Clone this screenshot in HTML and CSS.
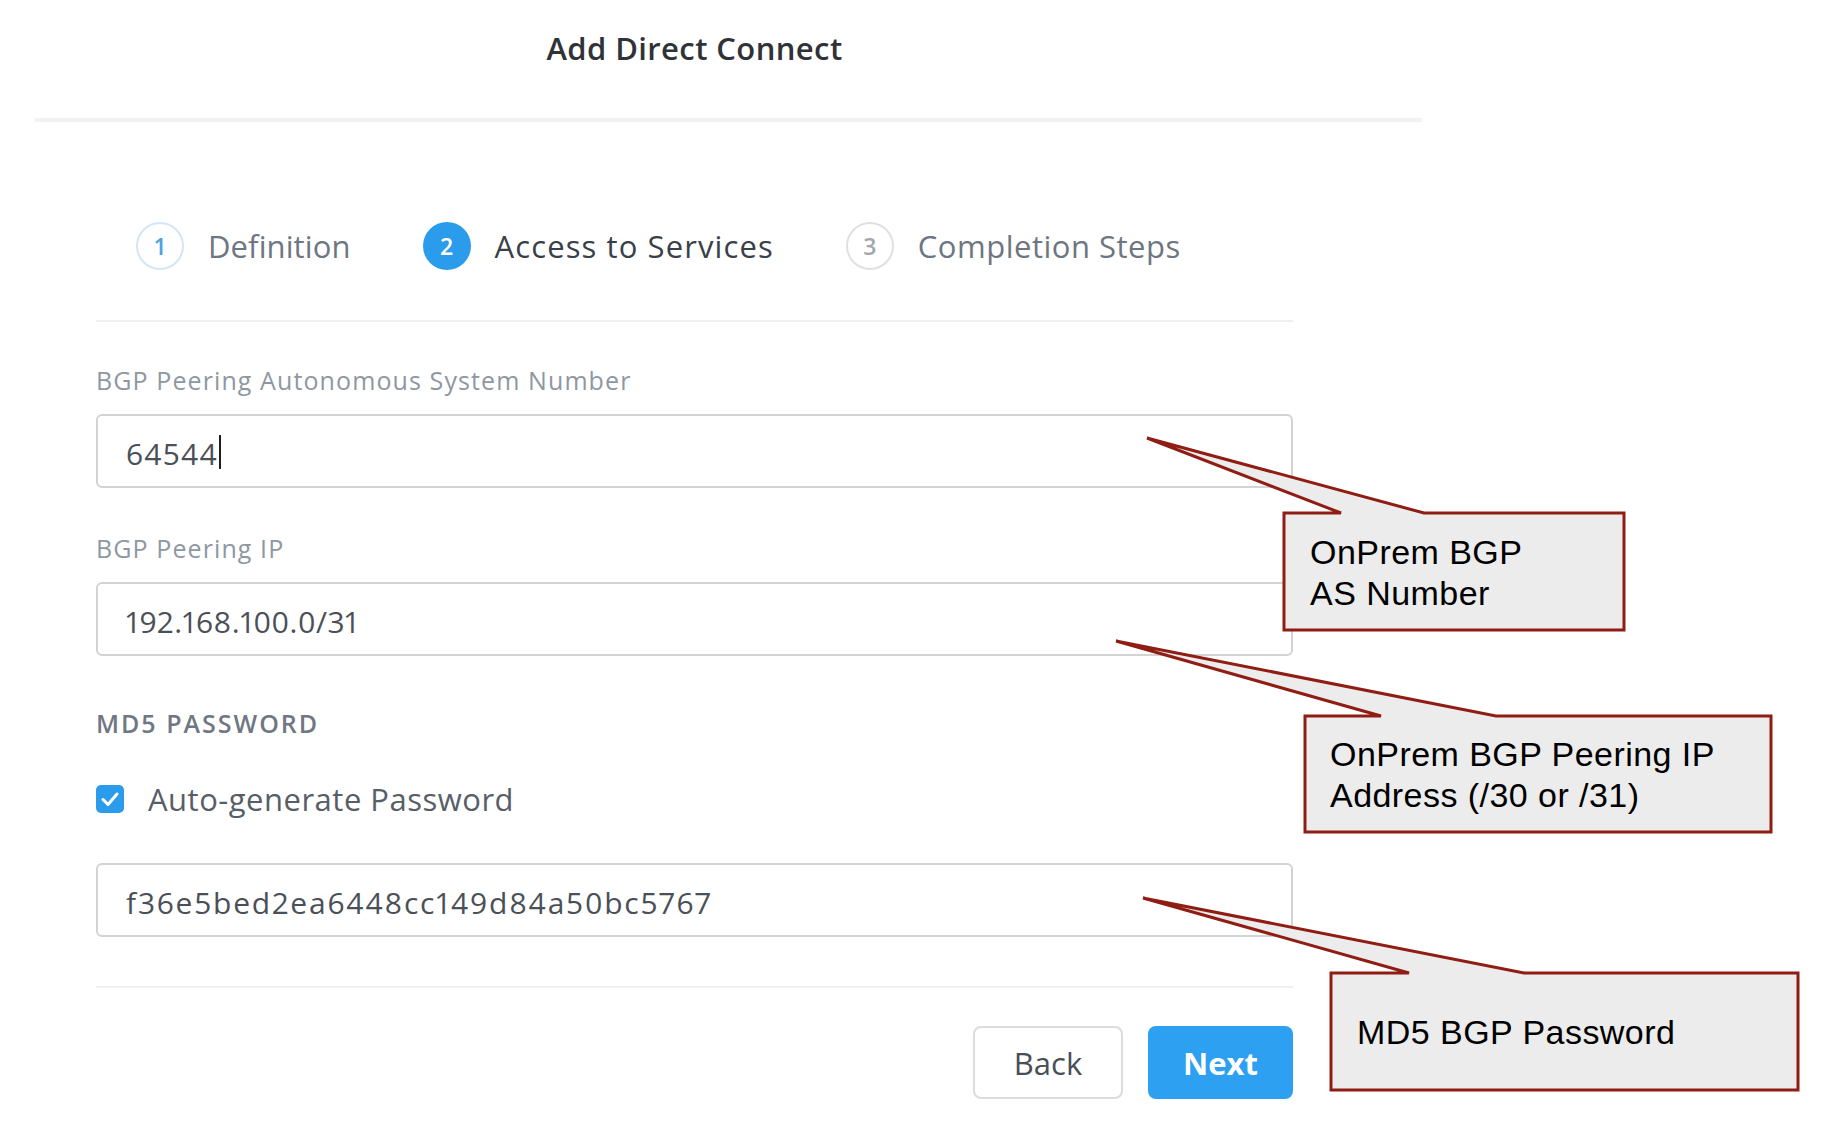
FILE: index.html
```html
<!DOCTYPE html>
<html lang="en">
<head>
<meta charset="utf-8">
<title>Add Direct Connect</title>
<link rel="stylesheet" href="styles.css">
</head>
<body>
<div class="page">
  <header class="header">
    <h1 class="title">Add Direct Connect</h1>
  </header>

  <main class="form">
    <nav class="steps">
      <div class="step step-done">
        <span class="step-num">1</span>
        <span class="step-label">Definition</span>
      </div>
      <div class="step step-active">
        <span class="step-num">2</span>
        <span class="step-label">Access to Services</span>
      </div>
      <div class="step step-todo">
        <span class="step-num">3</span>
        <span class="step-label">Completion Steps</span>
      </div>
    </nav>

    <section class="fields">
      <div class="field">
        <label class="field-label">BGP Peering Autonomous System Number</label>
        <div class="input"><span class="value value-asn">64544</span><span class="caret"></span></div>
      </div>

      <div class="field field-ip">
        <label class="field-label">BGP Peering IP</label>
        <div class="input"><span class="value">192.168.100.0/31</span></div>
      </div>

      <h2 class="section-title">MD5 PASSWORD</h2>

      <div class="check-row">
        <span class="checkbox">
          <svg viewBox="0 0 28 28" width="28" height="28"><path d="M7 14.5 L12 19.5 L21 9" fill="none" stroke="#fff" stroke-width="3" stroke-linecap="round" stroke-linejoin="round"/></svg>
        </span>
        <span class="check-label">Auto-generate Password</span>
      </div>

      <div class="input input-hash"><span class="value value-hash">f36e5bed2ea6448cc149d84a50bc5767</span></div>
    </section>

    <footer class="actions">
      <button class="btn btn-back">Back</button>
      <button class="btn btn-next">Next</button>
    </footer>
  </main>

  <svg class="callout-shapes" width="1828" height="1132" viewBox="0 0 1828 1132">
    <path d="M1284 513 L1341 513 L1147 438 L1424 513 L1624 513 L1624 630 L1284 630 Z"/>
    <path d="M1305 716 L1381 716 L1116 641 L1496 716 L1771 716 L1771 832 L1305 832 Z"/>
    <path d="M1331 973 L1409 973 L1143 898 L1524 973 L1798 973 L1798 1090 L1331 1090 Z"/>
  </svg>
  <div class="callout-text callout-1">OnPrem BGP<br>AS Number</div>
  <div class="callout-text callout-2">OnPrem BGP Peering IP<br>Address (/30 or /31)</div>
  <div class="callout-text callout-3">MD5 BGP Password</div>
</div>
</body>
</html>
```

FILE: styles.css
```css
* { box-sizing: border-box; }

html, body {
  margin: 0;
  padding: 0;
  background: #ffffff;
}

body {
  font-family: "Open Sans", "Noto Sans", "Liberation Sans", sans-serif;
  color: #3d434c;
}

.page {
  position: relative;
  width: 1828px;
  height: 1132px;
  overflow: hidden;
}

/* header */
.header {
  margin-left: 35px;
  width: 1387px;
  height: 122px;
  border-bottom: 4px solid #f2f2f2;
}

.title {
  margin: 0 0 0 61px;
  width: 1197px;
  padding-top: 28px;
  text-align: center;
  font-size: 31px;
  line-height: 40px;
  font-weight: 600;
  letter-spacing: 0.4px;
  color: #2f3337;
}

/* form column */
.form {
  margin-left: 96px;
  width: 1197px;
}

.steps {
  display: flex;
  align-items: center;
  gap: 72px;
  margin-top: 100px;
  padding-left: 40px;
  padding-bottom: 50px;
  border-bottom: 2px solid #f0f0f0;
}

.step {
  display: flex;
  align-items: center;
  gap: 24px;
  height: 48px;
}

.step-num {
  display: flex;
  align-items: center;
  justify-content: center;
  width: 48px;
  height: 48px;
  border-radius: 50%;
  font-size: 23px;
  font-weight: 600;
}

.step-label {
  font-size: 31px;
  letter-spacing: 0.5px;
  line-height: 40px;
}

.step-done .step-num {
  border: 2px solid #d3e6f6;
  color: #4fa2e2;
}
.step-done .step-label { color: #6e7681; letter-spacing: 0.1px; }

.step-active .step-num {
  background: #2b9bec;
  color: #ffffff;
}
.step-active .step-label { color: #3a4049; letter-spacing: 1.1px; }

.step-todo .step-num {
  border: 2px solid #e0e0e0;
  color: #a3a7ad;
}
.step-todo .step-label { color: #6e7681; }

/* fields */
.fields {
  padding-top: 42px;
}

.field-label {
  display: block;
  height: 32px;
  font-size: 25px;
  line-height: 32px;
  letter-spacing: 1.1px;
  color: #8e97a2;
  margin-bottom: 18px;
}

.field-ip { margin-top: 44px; }

.input {
  display: flex;
  align-items: center;
  height: 74px;
  border: 2px solid #d3d3d3;
  border-radius: 6px;
  padding-left: 28px;
  padding-top: 5px;
  background: #ffffff;
}

.value {
  font-size: 30px;
  letter-spacing: 0.5px;
  color: #4b5058;
  font-variant-numeric: proportional-nums;
}

.value-asn { letter-spacing: 1.2px; }

.value-hash { letter-spacing: 1.8px; }

.caret {
  display: inline-block;
  width: 2px;
  height: 34px;
  margin-left: 1px;
  margin-top: -4px;
  background: #1d1d1d;
}

.section-title {
  margin: 51px 0 0 0;
  height: 32px;
  font-size: 25px;
  line-height: 32px;
  font-weight: 600;
  letter-spacing: 2px;
  color: #6f7783;
}

.check-row {
  display: flex;
  align-items: center;
  gap: 24px;
  height: 36px;
  margin-top: 42px;
}

.checkbox {
  display: block;
  width: 28px;
  height: 28px;
  border-radius: 5px;
  background: #2b9bec;
}
.checkbox svg { display: block; }

.check-label {
  font-size: 31px;
  letter-spacing: 0.5px;
  color: #575e68;
}

.input-hash { margin-top: 46px; }

/* footer */
.actions {
  display: flex;
  justify-content: flex-end;
  gap: 25px;
  margin-top: 49px;
  padding-top: 38px;
  border-top: 2px solid #f0f0f0;
}

.btn {
  height: 73px;
  border-radius: 8px;
  font-family: "Open Sans", "Noto Sans", "Liberation Sans", sans-serif;
  font-size: 31px;
  cursor: pointer;
}

.btn-back {
  width: 150px;
  border: 2px solid #dcdcdc;
  background: #ffffff;
  color: #4a4f57;
}

.btn-next {
  width: 145px;
  border: none;
  background: #2ea0f1;
  color: #ffffff;
  font-weight: 700;
}

/* callouts overlay */
.callout-shapes {
  position: absolute;
  left: 0;
  top: 0;
  pointer-events: none;
}
.callout-shapes path {
  fill: #ececec;
  stroke: #8f1d14;
  stroke-width: 3;
  stroke-linejoin: miter;
}

.callout-text {
  position: absolute;
  font-family: "Liberation Sans", Arial, sans-serif;
  font-size: 34px;
  line-height: 41px;
  letter-spacing: 0.45px;
  color: #000000;
  white-space: nowrap;
}
.callout-1 { left: 1310px; top: 532px; }
.callout-2 { left: 1330px; top: 734px; }
.callout-3 { left: 1357px; top: 1012px; }
```
